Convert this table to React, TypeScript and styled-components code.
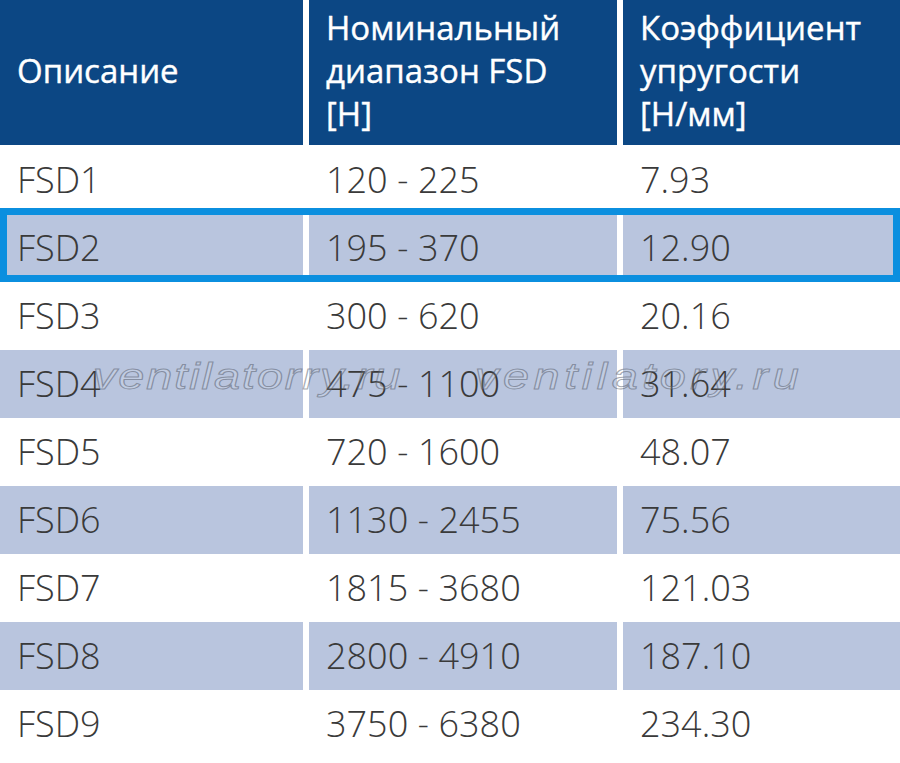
import { createGlobalStyle, styled } from "styled-components";

const GlobalStyle = createGlobalStyle`
  html, body {
    margin: 0;
    padding: 0;
    background: #fff;
  }
  body {
    font-family: "Open Sans", "Liberation Sans", sans-serif;
  }
`;

type Row = {
  name: string;
  range: string;
  rate: string;
};

const rows: Row[] = [
  { name: "FSD1", range: "120 - 225", rate: "7.93" },
  { name: "FSD2", range: "195 - 370", rate: "12.90" },
  { name: "FSD3", range: "300 - 620", rate: "20.16" },
  { name: "FSD4", range: "475 - 1100", rate: "31.64" },
  { name: "FSD5", range: "720 - 1600", rate: "48.07" },
  { name: "FSD6", range: "1130 - 2455", rate: "75.56" },
  { name: "FSD7", range: "1815 - 3680", rate: "121.03" },
  { name: "FSD8", range: "2800 - 4910", rate: "187.10" },
  { name: "FSD9", range: "3750 - 6380", rate: "234.30" },
];

function App() {
  return (
    <>
      <GlobalStyle />
      <Table>
        <HeadRow>
          <HeadCell>Описание</HeadCell>
          <HeadCell>
            Номинальный
            <br />
            диапазон FSD
            <br />
            [Н]
          </HeadCell>
          <HeadCell>
            Коэффициент
            <br />
            упругости
            <br />
            [Н/мм]
          </HeadCell>
        </HeadRow>
        {rows.map((row, i) => (
          <BodyRow key={row.name} $selected={row.name === "FSD2"}>
            <Cell $shaded={i % 2 === 1}>{row.name}</Cell>
            <Cell $shaded={i % 2 === 1}>{row.range}</Cell>
            <Cell $shaded={i % 2 === 1}>{row.rate}</Cell>
          </BodyRow>
        ))}
        <Watermark aria-hidden="true">
          <Mark $spacing={1.5}>ventilatorry.ru</Mark>
          <Mark $spacing={3.5}>ventilatory.ru</Mark>
        </Watermark>
      </Table>
    </>
  );
}

const Table = styled.div`
  position: relative;
  width: 900px;
  height: 763px;
  overflow: hidden;
  background: #fff;
`;

const HeadRow = styled.div`
  display: grid;
  grid-template-columns: 303px 308px 1fr;
  column-gap: 6px;
  height: 145px;
  margin-bottom: 1px;
`;

const HeadCell = styled.div`
  display: flex;
  align-items: center;
  padding: 0 0 4px 17px;
  background: #0c4784;
  color: #fff;
  font-size: 33px;
  font-weight: 500;
  line-height: 43px;
  -webkit-text-stroke: 0.4px #fff;
`;

const BodyRow = styled.div<{ $selected?: boolean }>`
  position: relative;
  display: grid;
  grid-template-columns: 303px 308px 1fr;
  column-gap: 6px;
  height: 68px;

  ${({ $selected }) =>
    $selected &&
    `
    &::after {
      content: "";
      position: absolute;
      top: -6px;
      left: 0;
      right: 0;
      bottom: 0;
      border: 7px solid #0b8fdf;
      pointer-events: none;
    }
  `}
`;

const Cell = styled.div<{ $shaded?: boolean }>`
  display: flex;
  align-items: center;
  padding-left: 17px;
  background: ${({ $shaded }) => ($shaded ? "#b9c5de" : "#fff")};
  color: #3a3a3a;
  font-family: "Open Sans Light", "Open Sans", "Liberation Sans", sans-serif;
  font-size: 36px;
  font-weight: 300;
  line-height: 68px;
  white-space: nowrap;
`;

const Watermark = styled.div`
  position: absolute;
  top: 357px;
  left: 93px;
  display: flex;
  gap: 56px;
  transform: scaleX(1.3);
  transform-origin: left center;
  pointer-events: none;
`;

const Mark = styled.span<{ $spacing: number }>`
  font-family: "Liberation Sans", Arial, sans-serif;
  font-style: italic;
  font-size: 36px;
  line-height: 40px;
  letter-spacing: ${({ $spacing }) => $spacing}px;
  white-space: nowrap;
  color: rgba(255, 255, 255, 0.12);
  -webkit-text-stroke: 1px rgba(80, 86, 100, 0.5);
`;

export default App;
